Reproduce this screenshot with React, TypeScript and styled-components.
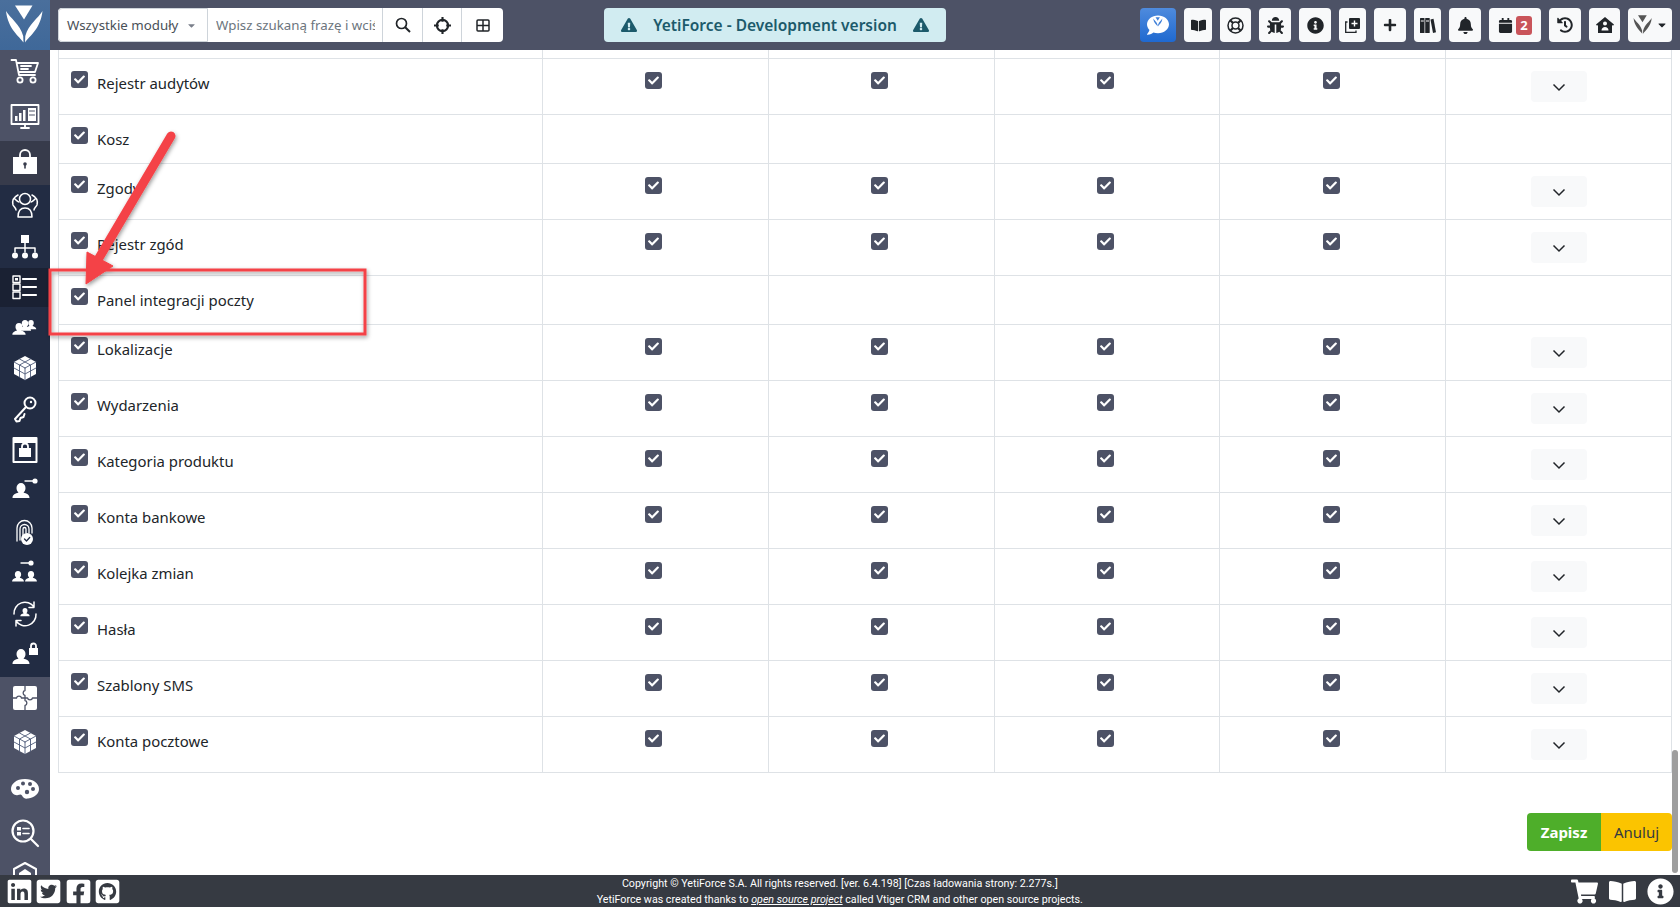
import React from 'react';
import styled, { createGlobalStyle } from 'styled-components';
import {
  FaBell, FaBookOpen, FaBug, FaCalendar, FaCaretDown, FaCheck, FaExclamationTriangle, FaFacebookSquare,
  FaGithubSquare, FaHistory, FaInfoCircle, FaLinkedin, FaPlus, FaShoppingCart, FaTwitterSquare, FaComment,
} from 'react-icons/fa';

const Global = createGlobalStyle`
  html, body { margin: 0; padding: 0; height: 100%; overflow: hidden; background: #fff; }
  body { font-family: "Noto Sans", "Open Sans", sans-serif; color: #212529; }
  * { box-sizing: border-box; }
`;

const Page = styled.div`
  position: relative;
  width: 1680px;
  height: 907px;
  display: flex;
  flex-direction: column;
  overflow: hidden;
`;
const TopBar = styled.header`
  height: 50px;
  flex: none;
  background: #4d5266;
  display: flex;
  align-items: center;
`;
const LogoBox = styled.div`
  width: 50px;
  height: 50px;
  flex: none;
  background: linear-gradient(180deg, #4a6f9c, #3f6899);
  display: flex;
  align-items: center;
  justify-content: center;
`;
const SearchGroup = styled.div`
  margin-left: 8px;
  width: 445px;
  height: 34px;
  background: #fff;
  border-radius: 4px;
  display: flex;
  font-size: 13.3px;
  overflow: hidden;
`;
const SelectBox = styled.div`
  width: 150px;
  display: flex;
  align-items: center;
  padding-left: 8px;
  color: #495057;
  border: 1px solid #ced4da;
  border-radius: 4px 0 0 4px;
  gap: 8px;
  svg { font-size: 11px; color: #7a7f8a; }
`;
const SearchText = styled.div`
  width: 175px;
  display: flex;
  align-items: center;
  padding-left: 8px;
  color: #6c757d;
  border-right: 1px solid #ced4da;
  white-space: nowrap;
  overflow: hidden;
  span { display: block; width: 159px; overflow: hidden; }
`;
const SearchButton = styled.div<{ $w: number; $last?: boolean }>`
  width: ${p => p.$w}px;
  display: flex;
  align-items: center;
  justify-content: center;
  color: #212529;
  border-right: ${p => (p.$last ? 'none' : '1px solid #ced4da')};
`;
const DevAlert = styled.div`
  margin-left: 101px;
  width: 342px;
  height: 34px;
  background: #d1ecf1;
  border-radius: 4px;
  color: #1c5a6b;
  font-size: 15.5px;
  font-weight: 600;
  display: flex;
  align-items: center;
  justify-content: center;
  gap: 16px;
  white-space: nowrap;
`;
const Tools = styled.div`
  margin-left: 194px;
  display: flex;
  gap: 8px;
`;
const ToolButton = styled.div<{ $w: number }>`
  width: ${p => p.$w}px;
  height: 34px;
  background: #f8f9fa;
  color: #212529;
  border-radius: 4px;
  display: flex;
  align-items: center;
  justify-content: center;
  gap: 3px;
  font-size: 16px;
`;
const ChatButton = styled(ToolButton)`
  background: linear-gradient(180deg, #4f8bdd, #1f69d0);
  color: #fff;
  position: relative;
`;
const ChatMark = styled.span`
  position: absolute;
  left: 13px;
  top: 9px;
  display: flex;
`;
const CountBadge = styled.span`
  width: 16px;
  height: 19px;
  background: #c9545a;
  color: #fff;
  border-radius: 3px;
  font-size: 13px;
  font-weight: 700;
  display: flex;
  align-items: center;
  justify-content: center;
`;
const Middle = styled.div`
  flex: 1;
  min-height: 0;
  display: flex;
`;
const SideBar = styled.nav`
  width: 50px;
  flex: none;
  overflow: hidden;
  background: #4d5266;
`;
const SideItem = styled.div<{ $h: number; $bg: string }>`
  height: ${p => p.$h}px;
  background: ${p => p.$bg};
  display: flex;
  align-items: center;
  justify-content: center;
  color: #fff;
`;
const Main = styled.main`
  flex: 1;
  min-width: 0;
  padding: 0 8px;
  position: relative;
`;
const Table = styled.div`
  border-left: 1px solid #dee2e6;
  border-right: 1px solid #dee2e6;
`;
const Row = styled.div<{ $h: number }>`
  height: ${p => p.$h}px;
  display: grid;
  grid-template-columns: 483px 226px 226px 225px 226px 1fr;
  border-bottom: 1px solid #dee2e6;
`;
const NameCell = styled.div`
  display: flex;
  align-items: flex-start;
  padding: 12px 0 0 12px;
  gap: 9px;
`;
const Label = styled.span`
  font-size: 14.9px;
  line-height: 20px;
  margin-top: 2px;
`;
const DataCell = styled.div<{ $pad?: number }>`
  border-left: 1px solid #dee2e6;
  display: flex;
  padding: 13px 0 0 ${p => p.$pad ?? 102}px;
`;
const ActionCell = styled.div`
  border-left: 1px solid #dee2e6;
  display: flex;
  justify-content: center;
  padding: 12px 0 0 0;
`;
const Check = styled.span`
  width: 17px;
  height: 17px;
  flex: none;
  background: #4d5266;
  border-radius: 3px;
  color: #fff;
  display: flex;
  align-items: center;
  justify-content: center;
  font-size: 11px;
`;
const Expand = styled.div`
  width: 56px;
  height: 31px;
  background: #f8f9fa;
  border-radius: 4px;
  display: flex;
  align-items: center;
  justify-content: center;
  padding-top: 2px;
`;
const Actions = styled.div`
  display: flex;
  justify-content: flex-end;
  margin-top: 40px;
`;
const Save = styled.div`
  width: 74px;
  height: 38px;
  background: #4eae2a;
  color: #fff;
  font-weight: 700;
  font-size: 15px;
  border-radius: 4px 0 0 4px;
  display: flex;
  align-items: center;
  justify-content: center;
`;
const Cancel = styled.div`
  width: 71px;
  height: 38px;
  background: #fbc400;
  color: #343a40;
  font-size: 15px;
  border-radius: 0 4px 4px 0;
  display: flex;
  align-items: center;
  justify-content: center;
`;
const ScrollThumb = styled.div`
  position: absolute;
  top: 700px;
  right: 2px;
  width: 6px;
  height: 123px;
  border-radius: 3px;
  background: #9e9e9e;
`;
const Footer = styled.footer`
  height: 32px;
  flex: none;
  background: #363a42;
  color: #fff;
  display: grid;
  grid-template-columns: 1fr auto 1fr;
  align-items: center;
  padding: 0 6px 0 5.6px;
`;
const FooterIcons = styled.div<{ $right?: boolean }>`
  display: flex;
  align-items: center;
  justify-content: ${p => (p.$right ? 'flex-end' : 'flex-start')};
  gap: ${p => (p.$right ? '11px' : '2.6px')};
  font-size: 27px;
  color: #fff;
  svg { display: block; }
`;
const FooterText = styled.div`
  font-family: "Roboto", sans-serif;
  font-size: 10.7px;
  line-height: 16px;
  text-align: center;
  white-space: nowrap;
  padding-top: 1px;
  em { text-decoration: underline; }
`;
const Annotation = styled.svg`
  position: absolute;
  left: 0;
  top: 0;
  width: 1680px;
  height: 907px;
  pointer-events: none;
`;

const YLogo = ({ size = 40, color = '#fff' }: { size?: number; color?: string }) => (
  <svg width={size} height={size} viewBox="0 0 40 40" fill={color}>
    <path d="M10 0.500H27.500L19 14.500Z" />
    <path d="M1 6C5 13 15 19 18.200 31L18.500 37.500C14 31 3 24 1 6Z" />
    <path d="M37.500 6C33.500 13 23.500 19 20.300 31L20 37.500C24.500 31 35.500 24 37.500 6Z" />
  </svg>
);

const S = ({ children, w = 30, h = 30 }: { children: React.ReactNode; w?: number; h?: number }) => (
  <svg width={w} height={h} viewBox="0 0 30 30" fill="none" stroke="#fff" strokeWidth="1.8" strokeLinejoin="round" strokeLinecap="round">
    {children}
  </svg>
);
const solid = { fill: '#fff', stroke: 'none' };

const person = (x: number, y: number, k = 1) => (
  <path {...solid} d={`M${x} ${y}a${4.5 * k} ${5 * k} 0 0 1 ${4.5 * k} ${5 * k}c0 ${2 * k} ${-1 * k} ${3.5 * k} ${-2 * k} ${4.5 * k}c${3 * k} ${1 * k} ${6 * k} ${2 * k} ${6 * k} ${5.5 * k}h${-17 * k}c0 ${-3.5 * k} ${3 * k} ${-4.5 * k} ${6 * k} ${-5.5 * k}c${-1 * k} ${-1 * k} ${-2 * k} ${-2.5 * k} ${-2 * k} ${-4.5 * k}a${4.5 * k} ${5 * k} 0 0 1 ${4.5 * k} ${-5 * k}z`} />
);
const keyH = (x: number, y: number) => (
  <g>
    <circle cx={x} cy={y} r="2.6" {...solid} />
    <path d={`M${x - 2} ${y}H${x - 10}`} strokeWidth="1.4" />
  </g>
);
const cube = (
  <>
    <path {...solid} d="M15 3L26 9V21L15 27L4 21V9Z" />
    <g stroke="#4d5a78" strokeWidth="0.9">
      <path d="M15 15V27M15 15L4 9M15 15L26 9M9.500 6L20.500 12V24M20.500 6L9.500 12V24M4 15L15 21L26 15" />
    </g>
  </>
);

const sideIcons: { h: number; bg: string; icon: React.ReactNode }[] = [
  { h: 42, bg: '#4d5266', icon: <S><path d="M1.500 4H6L9 19H25M6.500 7H28L25 16H8.500" /><path d="M11 10h10M11 13h7" /><circle cx="10" cy="24" r="2.600" /><circle cx="23" cy="24" r="2.600" /></S> },
  { h: 49, bg: '#4d5266', icon: <S><rect x="1.500" y="3" width="27" height="19" /><path d="M11 26h8M15 22v4" /><path {...solid} d="M5 19v-5h2.500v5zM9 19v-8h2.500v8zM13 19v-11h2.500v11zM18 6h8v13h-8z" /><path d="M19.500 9h5M19.500 13h5" stroke="#4d5266" strokeWidth="1" /></S> },
  { h: 44, bg: '#373b4b', icon: <S><path d="M10 9V7a5 5 0 0 1 10 0v2" /><rect {...solid} x="3" y="9" width="24" height="17" /><circle cx="15" cy="16" r="1.800" fill="#373b4b" stroke="none" /><path d="M15 16v4" stroke="#373b4b" strokeWidth="1.600" /></S> },
  { h: 40, bg: '#222c43', icon: <S><circle cx="15" cy="9" r="5.500" strokeWidth="1.500" /><path d="M8 27c0-5 2-9 7-9s7 4 7 9z" strokeWidth="1.500" /><path d="M8 5c-4 2-6 6-5 10 1 2 3 3 3 5M22 5c4 2 6 6 5 10-1 2-3 3-3 5M5 9c2 2 3 3 4 3M25 9c-2 2-3 3-4 3" strokeWidth="1.500" /></S> },
  { h: 43, bg: '#222c43', icon: <S><rect {...solid} x="11" y="3" width="8" height="8" /><path d="M15 11v5M5 20v-4h20v4M15 16v4" strokeWidth="1.500" /><circle {...solid} cx="5" cy="23.500" r="3" /><circle {...solid} cx="15" cy="23.500" r="3" /><circle {...solid} cx="25" cy="23.500" r="3" /></S> },
  { h: 39, bg: '#1a2133', icon: <S><rect x="3" y="3" width="7" height="6.500" strokeWidth="1.400" /><rect {...solid} x="5" y="5" width="3" height="2.500" /><rect x="3" y="11" width="7" height="6.500" strokeWidth="1.400" /><rect x="3" y="19" width="7" height="6.500" strokeWidth="1.400" /><path d="M13 6h13M13 14h13M13 22h13" strokeWidth="2.200" /></S> },
  { h: 40, bg: '#222c43', icon: <S>{person(21, 8, 0.62)}{person(15, 8, 0.72)}{person(9, 11, 0.78)}</S> },
  { h: 41, bg: '#222c43', icon: <S>{cube}</S> },
  { h: 41, bg: '#222c43', icon: <S><circle cx="20" cy="9" r="5.500" strokeWidth="2" /><circle cx="21" cy="8" r="1.200" {...solid} /><path d="M16 13L5 25l1.500 2.500 3-.5 1-3 3-1 1-3" strokeWidth="2" /></S> },
  { h: 41, bg: '#222c43', icon: <S><rect x="3.500" y="3" width="23" height="24" strokeWidth="2" /><rect {...solid} x="3" y="3" width="24" height="5" /><rect {...solid} x="9" y="13" width="12" height="9" /><path d="M12 13v-1.500a3 3 0 0 1 6 0V13" /></S> },
  { h: 41, bg: '#222c43', icon: <S>{person(11, 7, 1)}{keyH(25, 5)}</S> },
  { h: 42, bg: '#222c43', icon: <S><path d="M7 24V11a7.500 7.500 0 0 1 15 0v5M10 23V12a4.500 4.500 0 0 1 9 0v4M13 21V12a1.500 1.500 0 0 1 3 0v4" strokeWidth="1.300" /><circle {...solid} cx="17" cy="22" r="6" /><path d="M14.500 22l2 2 3.200-3.500" stroke="#222c43" strokeWidth="1.300" /></S> },
  { h: 40, bg: '#222c43', icon: <S>{person(8, 13, 0.7)}{person(21, 13, 0.7)}{keyH(21, 5)}</S> },
  { h: 41, bg: '#222c43', icon: <S><path d="M4 15A11 11 0 0 1 24 8M26 15A11 11 0 0 1 6 22M24 3v5.500h-5M6 27v-5.500h5" strokeWidth="1.500" />{person(15, 9, 0.55)}</S> },
  { h: 43, bg: '#222c43', icon: <S>{person(11, 8, 1)}<rect {...solid} x="19" y="7" width="9" height="7" /><path d="M21 7V5a2.500 2.500 0 0 1 5 0v2" /></S> },
  { h: 41, bg: '#4d5266', icon: <S><rect {...solid} x="3" y="3" width="24" height="24" rx="2" /><path stroke="#4d5266" strokeWidth="1.300" d="M15 3v4.500c-2.500.5-2.500 4.500 0 5V15h-3.500c-.5-2.500-4.500-2.500-5 0H3M15 15h2.500c.5 2.500 4.500 2.500 5 0H27M15 15v2.500c2.500.5 2.500 4.500 0 5V27" /></S> },
  { h: 47, bg: '#4d5266', icon: <S>{cube}</S> },
  { h: 46, bg: '#4d5266', icon: <S><path {...solid} d="M15 6C6 6 1 11 1 16c0 4 4 7 7 6 2-.7 3-1 4 .5 1 2.500 3 3.500 6 3 7-1 11-5 11-9.500C29 10 23 6 15 6Z" /><g fill="#4d5266" stroke="none"><circle cx="8" cy="15" r="2" /><circle cx="13" cy="10.500" r="2" /><circle cx="20" cy="11" r="2" /><circle cx="23" cy="16" r="2" /><circle cx="17" cy="19" r="2.200" /></g></S> },
  { h: 44, bg: '#4d5266', icon: <S><circle cx="13" cy="13" r="10.500" strokeWidth="2.200" /><path d="M21 21l7 7" strokeWidth="2.200" /><rect {...solid} x="7" y="9" width="4" height="3.500" /><rect {...solid} x="7" y="14" width="4" height="3.500" /><path d="M13 10.500h6M13 15.500h6" strokeWidth="1.600" /></S> },
  { h: 40, bg: '#4d5266', icon: <S><path d="M15 3L26 9V21L15 27L4 21V9Z" strokeWidth="2" /><path {...solid} d="M15 9L21 13V18H9V13Z" /></S> },
];

const rows: { name: string; full: boolean }[] = [
  { name: 'Rejestr audytów', full: true },
  { name: 'Kosz', full: false },
  { name: 'Zgody', full: true },
  { name: 'Rejestr zgód', full: true },
  { name: 'Panel integracji poczty', full: false },
  { name: 'Lokalizacje', full: true },
  { name: 'Wydarzenia', full: true },
  { name: 'Kategoria produktu', full: true },
  { name: 'Konta bankowe', full: true },
  { name: 'Kolejka zmian', full: true },
  { name: 'Hasła', full: true },
  { name: 'Szablony SMS', full: true },
  { name: 'Konta pocztowe', full: true },
];

const Box = () => (
  <Check><FaCheck /></Check>
);
const Chevron = () => (
  <svg width="14" height="9" viewBox="0 0 14 9" fill="none" stroke="#212529" strokeWidth="1.500"><path d="M1.500 1.500L7 7L12.500 1.500" /></svg>
);

const App = () => (
  <Page>
    <Global />
    <TopBar>
      <LogoBox><YLogo /></LogoBox>
      <SearchGroup>
        <SelectBox>Wszystkie moduły <FaCaretDown /></SelectBox>
        <SearchText><span>Wpisz szukaną frazę i wciśnij</span></SearchText>
        <SearchButton $w={40}>
          <svg width="16" height="16" viewBox="0 0 16 16" fill="none" stroke="#212529" strokeWidth="1.700"><circle cx="6.500" cy="6.500" r="5" /><path d="M10.200 10.200L15 15" strokeWidth="2" /></svg>
        </SearchButton>
        <SearchButton $w={39}>
          <svg width="17" height="17" viewBox="0 0 16 16" fill="none" stroke="#212529" strokeWidth="2"><circle cx="8" cy="8" r="5.300" /><path d="M8 0v4.500M8 11.500v4.500M0 8h4.500M11.500 8h4.500" /></svg>
        </SearchButton>
        <SearchButton $w={41} $last>
          <svg width="14" height="13" viewBox="0 0 14 13" fill="none" stroke="#212529" strokeWidth="1.500"><rect x="1" y="1" width="12" height="11" rx="1" /><path d="M1 6.500h12M7 1v11" /></svg>
        </SearchButton>
      </SearchGroup>
      <DevAlert><FaExclamationTriangle size={16} /> YetiForce - Development version <FaExclamationTriangle size={16} /></DevAlert>
      <Tools>
        <ChatButton $w={36}><FaComment size={22} /><ChatMark><YLogo size={10} color="#3f7fd8" /></ChatMark></ChatButton>
        <ToolButton $w={28}><FaBookOpen size={15} /></ToolButton>
        <ToolButton $w={31}>
          <svg width="17" height="17" viewBox="0 0 17 17" fill="none" stroke="#212529"><circle cx="8.500" cy="8.500" r="7.500" strokeWidth="1.500" /><circle cx="8.500" cy="8.500" r="3.500" strokeWidth="1.500" /><path d="M3.200 3.200L6 6M13.800 3.200L11 6M3.200 13.800L6 11M13.800 13.800L11 11" strokeWidth="2.200" /></svg>
        </ToolButton>
        <ToolButton $w={32}><FaBug size={17} /></ToolButton>
        <ToolButton $w={32}><FaInfoCircle size={17} /></ToolButton>
        <ToolButton $w={27}>
          <svg width="15" height="15" viewBox="0 0 15 15"><path fill="#212529" d="M5 0h9a1 1 0 0 1 1 1v9a1 1 0 0 1-1 1H5a1 1 0 0 1-1-1V1a1 1 0 0 1 1-1z" /><path fill="#fff" d="M8.800 2.500h1.400v2.300h2.300v1.400h-2.300v2.300H8.800V6.200H6.500V4.800h2.300z" /><path fill="none" stroke="#212529" strokeWidth="1.300" d="M2.500 4H.7v10.300H11v-1.800" /></svg>
        </ToolButton>
        <ToolButton $w={32}><FaPlus size={14} /></ToolButton>
        <ToolButton $w={27}>
          <svg width="16" height="15" viewBox="0 0 16 15" fill="#212529"><rect width="4.500" height="15" y="0" rx=".5" /><rect x="5.200" width="4.500" height="15" rx=".5" /><path d="M10.500 1.500l3-.8L16 14.300l-3 .7z" /><path d="M.8 3h3M6 3h3" stroke="#fff" strokeWidth="1" /></svg>
        </ToolButton>
        <ToolButton $w={32}><FaBell size={17} /></ToolButton>
        <ToolButton $w={52}><FaCalendar size={15} /><CountBadge>2</CountBadge></ToolButton>
        <ToolButton $w={32}><FaHistory size={16} /></ToolButton>
        <ToolButton $w={31}>
          <svg width="18" height="16" viewBox="0 0 18 16" fill="#212529"><path fillRule="evenodd" d="M9 0l9 7.500-1 1.200-1-.8V16H2V7.900l-1 .8L0 7.500ZM9 4.500a2 2 0 1 0 0 4 2 2 0 0 0 0-4ZM5.500 13.500h7c0-2-1.500-3.500-3.500-3.500s-3.500 1.500-3.500 3.500Z" /></svg>
        </ToolButton>
        <ToolButton $w={44}><YLogo size={20} color="#555" /><FaCaretDown size={12} /></ToolButton>
      </Tools>
    </TopBar>
    <Middle>
      <SideBar>
        {sideIcons.map((it, i) => (
          <SideItem key={i} $h={it.h} $bg={it.bg}>{it.icon}</SideItem>
        ))}
      </SideBar>
      <Main>
        <Table>
          <Row $h={9}>
            <div /><DataCell /><DataCell /><DataCell /><DataCell /><DataCell />
          </Row>
          {rows.map(r => (
            <Row key={r.name} $h={r.full ? 56 : 49}>
              <NameCell><Box /><Label>{r.name}</Label></NameCell>
              {[102, 102, 102, 103].map((pad, i) => <DataCell key={i} $pad={pad}>{r.full && <Box />}</DataCell>)}
              <ActionCell>{r.full && <Expand><Chevron /></Expand>}</ActionCell>
            </Row>
          ))}
        </Table>
        <Actions>
          <Save>Zapisz</Save>
          <Cancel>Anuluj</Cancel>
        </Actions>
        <ScrollThumb />
      </Main>
    </Middle>
    <Footer>
      <FooterIcons>
        <FaLinkedin /><FaTwitterSquare /><FaFacebookSquare /><FaGithubSquare />
      </FooterIcons>
      <FooterText>
        Copyright © YetiForce S.A. All rights reserved. [ver. 6.4.198] [Czas ładowania strony: 2.277s.]<br />
        YetiForce was created thanks to <em>open source project</em> called Vtiger CRM and other open source projects.
      </FooterText>
      <FooterIcons $right>
        <FaShoppingCart /><FaBookOpen /><FaInfoCircle />
      </FooterIcons>
    </Footer>
    <Annotation viewBox="0 0 1680 907">
      <defs>
        <filter id="shade" x="-20%" y="-20%" width="140%" height="140%">
          <feDropShadow dx="1" dy="2" stdDeviation="2" floodColor="#000" floodOpacity="0.4" />
        </filter>
      </defs>
      <g filter="url(#shade)">
        <rect x="50" y="270" width="315" height="64" fill="none" stroke="#f44347" strokeWidth="3" />
        <path d="M171 136L99 258" stroke="#f44347" strokeWidth="9" strokeLinecap="round" fill="none" />
        <path d="M86 284L87 252L113 266Z" fill="#f44347" stroke="#f44347" strokeWidth="1" />
      </g>
    </Annotation>
  </Page>
);

export default App;
